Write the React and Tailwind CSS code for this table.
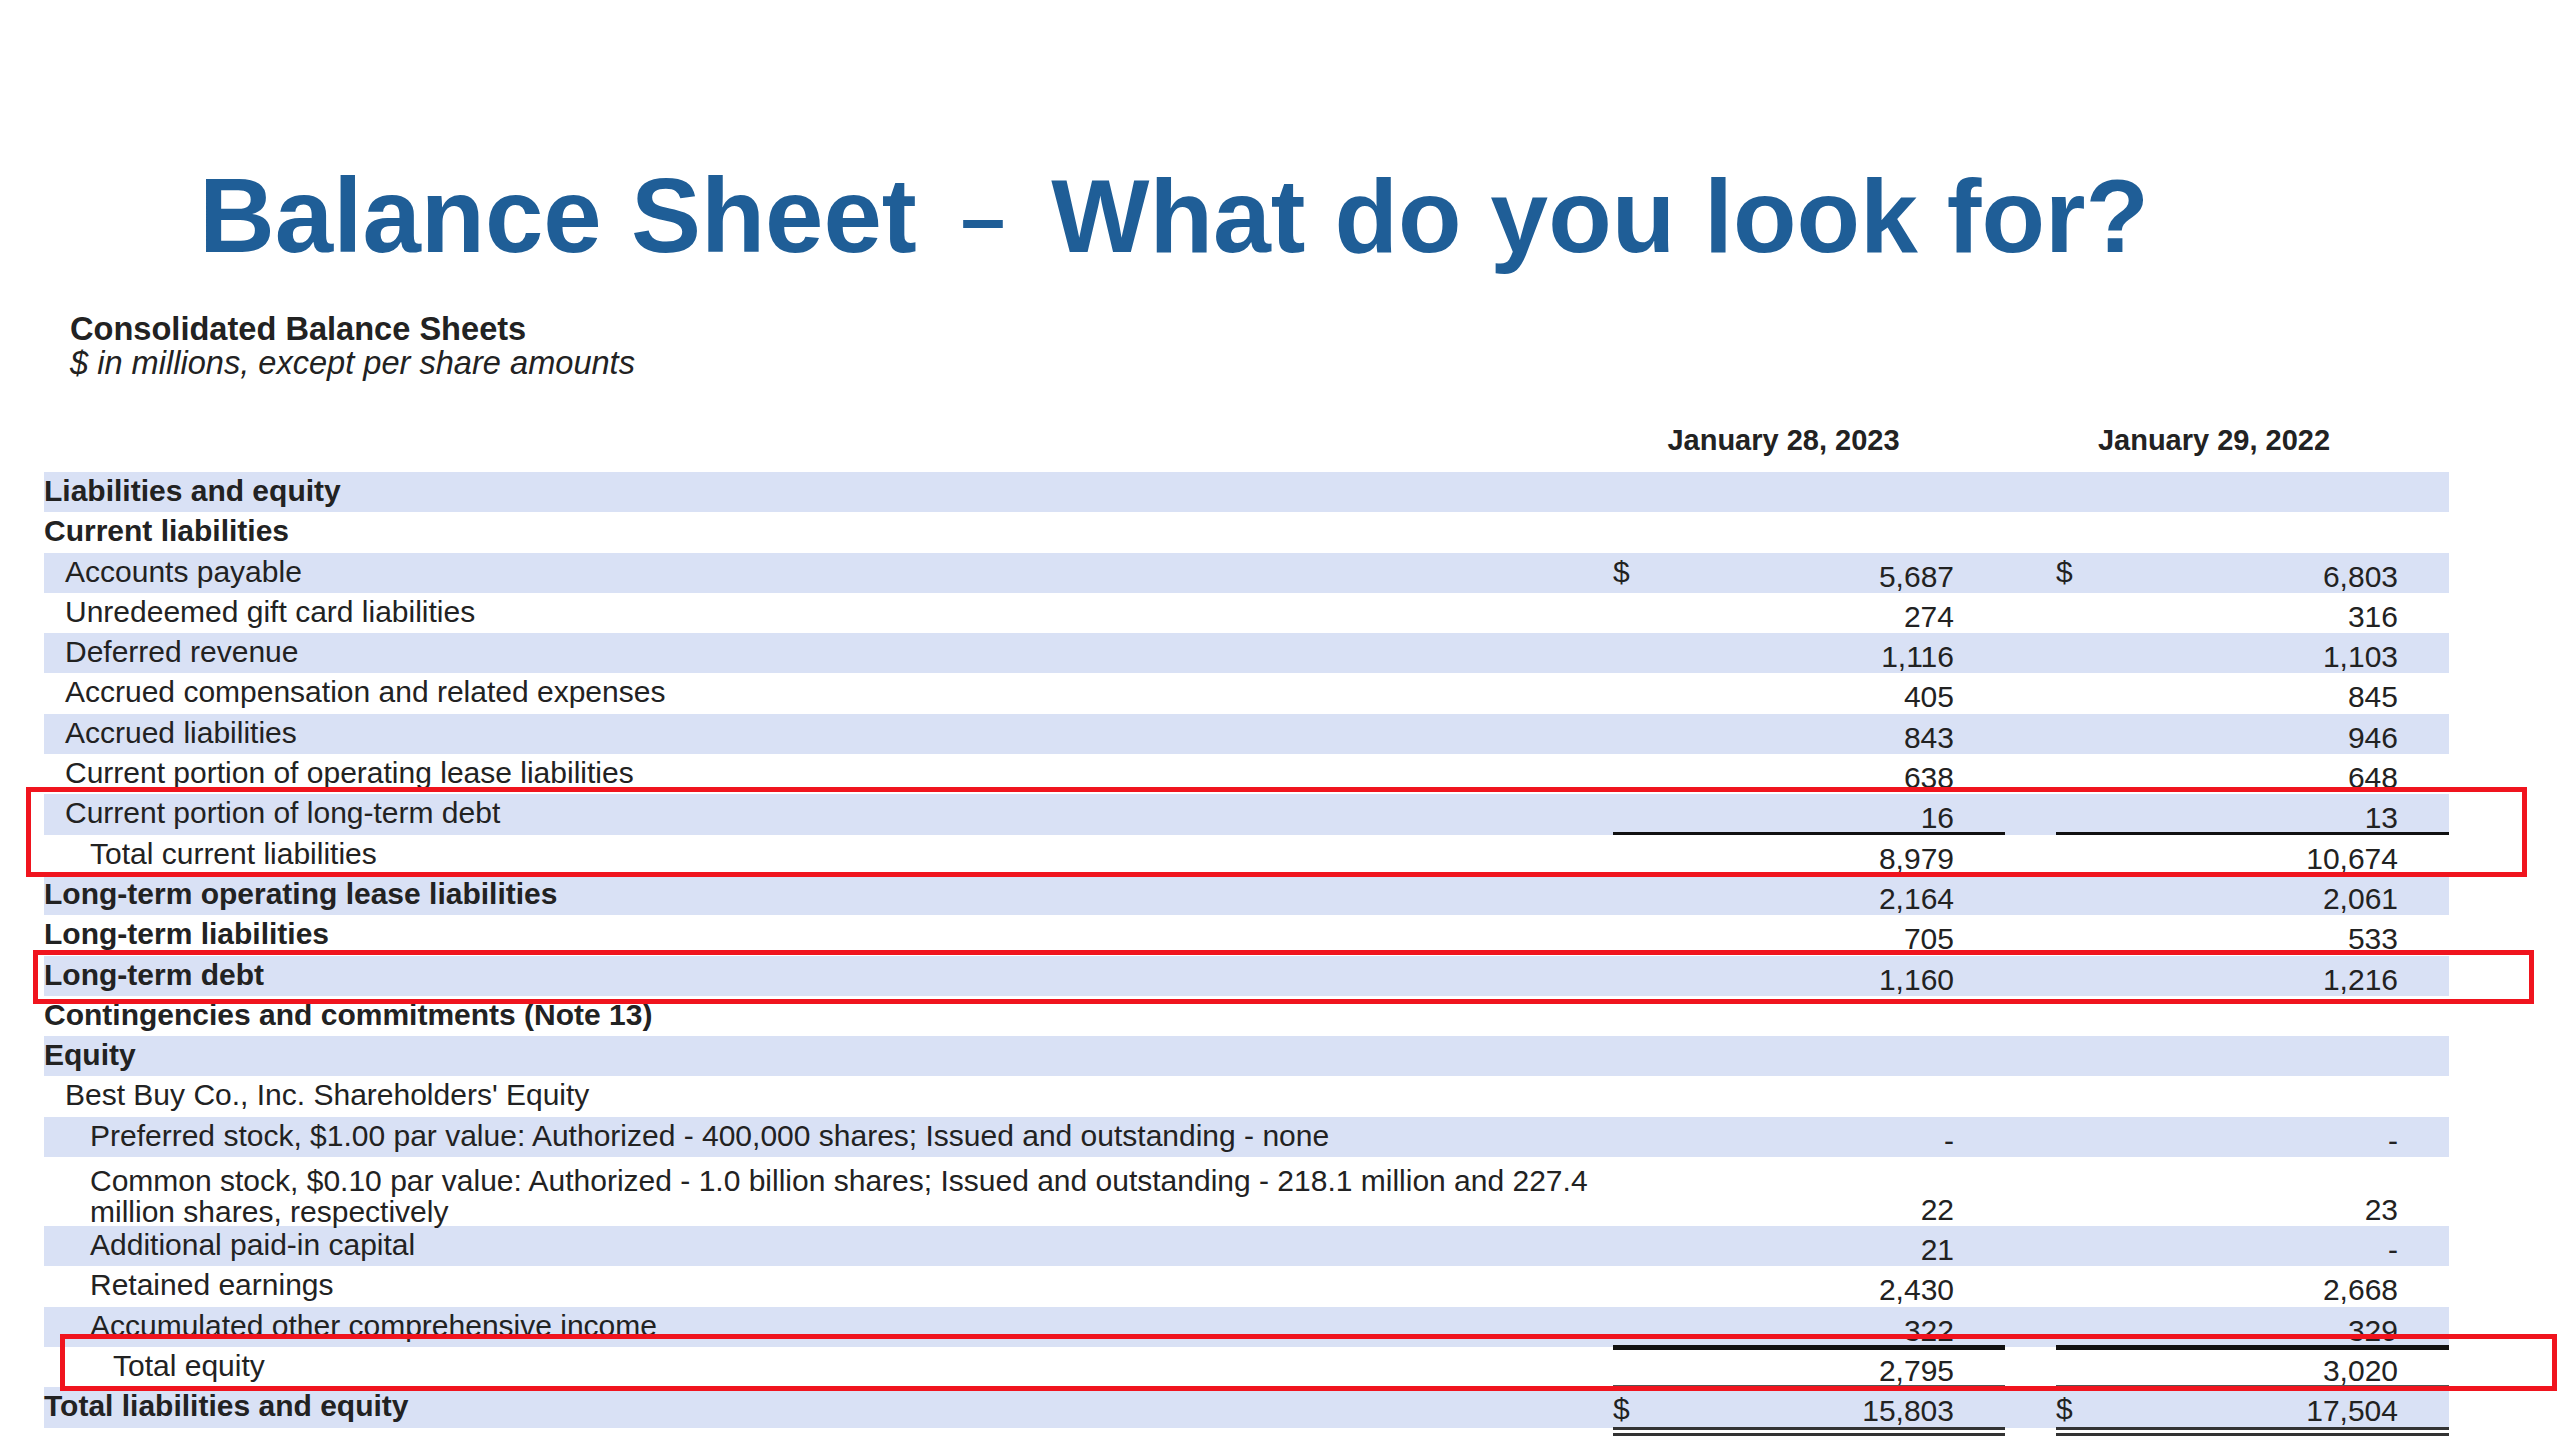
import React from 'react';

// Balance sheet rows, top to bottom. a / b = Jan 28 2023 / Jan 29 2022
const rows = [
  { label: 'Liabilities and equity', level: 0, bold: true },
  { label: 'Current liabilities', level: 0, bold: true },
  { label: 'Accounts payable', level: 1, a: '5,687', b: '6,803', dollar: 'top' },
  { label: 'Unredeemed gift card liabilities', level: 1, a: '274', b: '316' },
  { label: 'Deferred revenue', level: 1, a: '1,116', b: '1,103' },
  { label: 'Accrued compensation and related expenses', level: 1, a: '405', b: '845' },
  { label: 'Accrued liabilities', level: 1, a: '843', b: '946' },
  { label: 'Current portion of operating lease liabilities', level: 1, a: '638', b: '648' },
  { label: 'Current portion of long-term debt', level: 1, a: '16', b: '13', line: 'single' },
  { label: 'Total current liabilities', level: 2, a: '8,979', b: '10,674' },
  { label: 'Long-term operating lease liabilities', level: 0, bold: true, a: '2,164', b: '2,061' },
  { label: 'Long-term liabilities', level: 0, bold: true, a: '705', b: '533' },
  { label: 'Long-term debt', level: 0, bold: true, a: '1,160', b: '1,216' },
  { label: 'Contingencies and commitments (Note 13)', level: 0, bold: true },
  { label: 'Equity', level: 0, bold: true },
  { label: "Best Buy Co., Inc. Shareholders' Equity", level: 1 },
  {
    label: 'Preferred stock, $1.00 par value: Authorized - 400,000 shares; Issued and outstanding - none',
    level: 2,
    a: '-',
    b: '-',
  },
  {
    label: 'Common stock, $0.10 par value: Authorized - 1.0 billion shares; Issued and outstanding - 218.1 million and 227.4',
    label2: 'million shares, respectively',
    level: 2,
    a: '22',
    b: '23',
    tall: true,
  },
  { label: 'Additional paid-in capital', level: 2, a: '21', b: '-' },
  { label: 'Retained earnings', level: 2, a: '2,430', b: '2,668' },
  { label: 'Accumulated other comprehensive income', level: 2, a: '322', b: '329', line: 'thick' },
  { label: 'Total equity', level: 3, a: '2,795', b: '3,020', line: 'gray' },
  { label: 'Total liabilities and equity', level: 0, bold: true, a: '15,803', b: '17,504', dollar: 'low', line: 'double' },
];

const indent = ['pl-0', 'pl-[21px]', 'pl-[46px]', 'pl-[69px]'];

const lines = {
  single: 'border-b-[3px] border-[#111]',
  thick: 'border-b-[5px] border-[#111]',
  gray: 'border-b-[4px] border-[#555]',
  double: 'border-b-[9px] border-double border-[#333] h-[49px]',
};

function ValueCell({ value, dollar, line, tall }) {
  return (
    <div className={`flex justify-between items-start pr-[51px] ${line ? lines[line] : ''}`}>
      <span className={dollar === 'low' ? 'pt-[7px]' : 'pt-[4px]'}>{dollar ? '$' : ''}</span>
      <span className={tall ? 'pt-[38px]' : 'pt-[9px]'}>{value}</span>
    </div>
  );
}

function Row({ row, shaded }) {
  return (
    <div
      className={`grid grid-cols-[1569px_392px_51px_393px] ${row.tall ? 'h-[69px]' : 'h-[40.3px]'} ${
        shaded ? 'bg-[#d9e1f5]' : 'bg-white'
      } text-[30px] leading-[29px] text-[#222]`}
    >
      <div className={`${indent[row.level]} ${row.bold ? 'font-bold' : ''} ${row.tall ? 'pt-[8px] leading-[31px]' : 'pt-[4px]'}`}>
        {row.label}
        {row.label2 && (
          <>
            <br />
            {row.label2}
          </>
        )}
      </div>
      <ValueCell value={row.a} dollar={row.dollar} line={row.line} tall={row.tall} />
      <div />
      <ValueCell value={row.b} dollar={row.dollar} line={row.line} tall={row.tall} />
    </div>
  );
}

export default function App() {
  return (
    <div
      className="relative w-[2560px] h-[1440px] overflow-hidden bg-white"
      style={{ fontFamily: '"Liberation Sans", Arial, sans-serif' }}
    >
      <h1 className="pl-[199px] pt-[163px] text-[105px] leading-none font-bold text-[#1f5e97] whitespace-nowrap">
        Balance Sheet<span className="ml-[44px] mr-[46px] text-[80px] align-[7px]">–</span>
        <span className="text-[104px]">What do you look for?</span>
      </h1>

      <div className="mt-[44px] pl-[70px] text-[32.6px] leading-[34px] text-[#222]">
        <div className="font-bold">Consolidated Balance Sheets</div>
        <div className="italic">$ in millions, except per share amounts</div>
      </div>

      <div className="ml-[44px] mt-[43px] w-[2405px]">
        {/* column headers */}
        <div className="grid grid-cols-[1569px_392px_51px_393px] h-[34px] text-[29px] leading-[34px] font-bold text-[#222]">
          <div />
          <div className="pr-[51px] text-center">January 28, 2023</div>
          <div />
          <div className="pr-[77px] text-center">January 29, 2022</div>
        </div>

        <div className="mt-[15px]">
          {rows.map((row, i) => (
            <Row key={row.label} row={row} shaded={i % 2 === 0} />
          ))}
        </div>
      </div>

      {/* highlight boxes drawn over the sheet */}
      <div className="absolute left-[26px] top-[787px] w-[2501px] h-[90px] border-[5px] border-[#f0141e]" />
      <div className="absolute left-[33px] top-[950px] w-[2501px] h-[54px] border-[5px] border-[#f0141e]" />
      <div className="absolute left-[60px] top-[1334px] w-[2497px] h-[57px] border-[5px] border-[#f0141e]" />
    </div>
  );
}
